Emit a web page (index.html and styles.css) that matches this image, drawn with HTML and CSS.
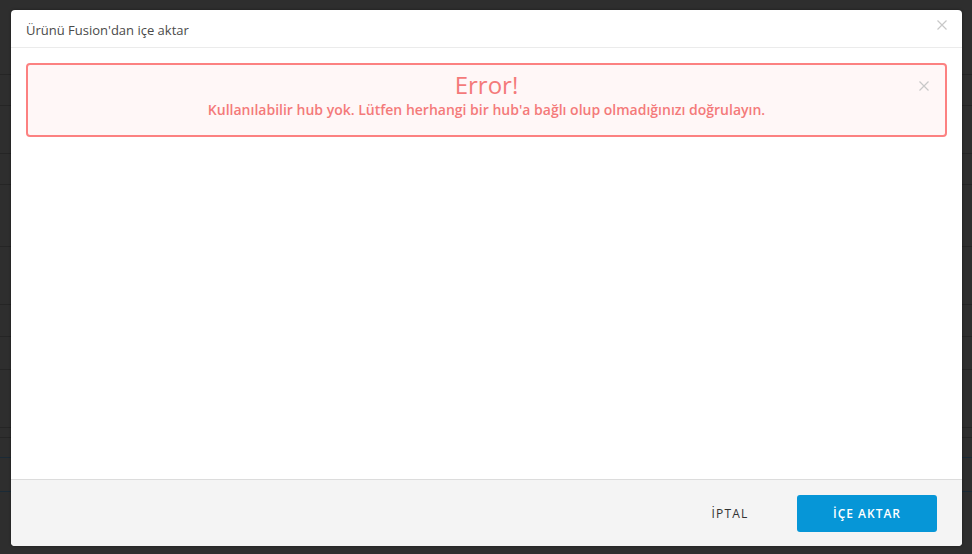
FILE: index.html
```html
<!DOCTYPE html>
<html lang="tr">
<head>
<meta charset="utf-8">
<title>Ürünü Fusion'dan içe aktar</title>
<link rel="stylesheet" href="styles.css">
</head>
<body>
<div class="backdrop">
  <div class="bg-lines">
    <div class="ln" style="top:74px"></div>
    <div class="ln" style="top:105px"></div>
    <div class="ln" style="top:153px"></div>
    <div class="ln" style="top:184px"></div>
    <div class="ln" style="top:246px"></div>
    <div class="ln" style="top:304px"></div>
    <div class="ln" style="top:336px"></div>
    <div class="ln" style="top:369px"></div>
    <div class="ln" style="top:427px"></div>
    <div class="ln" style="top:437px"></div>
    <div class="ln blue" style="top:457px"></div>
    <div class="ln blue" style="top:491px"></div>
  </div>
  <div class="dialog">
    <div class="header">
      <span class="title">Ürünü Fusion'dan içe aktar</span>
      <svg class="close" width="10" height="10" viewBox="0 0 10 10"><path d="M0.5 0.5L9.5 9.5M9.5 0.5L0.5 9.5" stroke="#c8c8c8" stroke-width="1.2"/></svg>
    </div>
    <div class="body">
      <div class="alert">
        <div class="alert-title">Error!</div>
        <div class="alert-msg">Kullanılabilir hub yok. Lütfen herhangi bir hub'a bağlı olup olmadığınızı doğrulayın.</div>
        <svg class="alert-close" width="10" height="10" viewBox="0 0 10 10"><path d="M0.5 0.5L9.5 9.5M9.5 0.5L0.5 9.5" stroke="#c8c8c8" stroke-width="1.2"/></svg>
      </div>
    </div>
    <div class="footer">
      <button class="btn btn-cancel">İPTAL</button>
      <button class="btn btn-primary">İÇE AKTAR</button>
    </div>
  </div>
</div>
</body>
</html>
```

FILE: styles.css
```css
html, body {
  margin: 0;
  padding: 0;
  width: 972px;
  height: 554px;
  overflow: hidden;
  background: #2e2e2e;
  font-family: "Open Sans", "Noto Sans", "Liberation Sans", sans-serif;
}
.backdrop {
  position: relative;
  width: 972px;
  height: 554px;
  padding: 10px 10px 8px 11px;
  box-sizing: border-box;
}
.bg-lines {
  position: absolute;
  inset: 0;
}
.ln {
  position: absolute;
  left: 0;
  right: 0;
  height: 1px;
  background: #252525;
}
.ln.blue {
  background: #1a2a36;
}
.dialog {
  position: relative;
  width: 951px;
  height: 536px;
  background: #fff;
  border-radius: 4px;
  display: flex;
  flex-direction: column;
  overflow: hidden;
  box-shadow: 0 0 3px rgba(0,0,0,0.4);
}
.header {
  height: 38px;
  border-bottom: 1px solid #ebebeb;
  display: flex;
  align-items: center;
  justify-content: space-between;
  padding: 0 15px 0 15px;
  box-sizing: border-box;
  flex: none;
}
.title {
  font-size: 13px;
  color: #4a4a4a;
  padding-top: 2px;
}
.close {
  margin-top: -8px;
}
.body {
  flex: 1;
  padding: 15px 15px 0 15px;
}
.alert {
  position: relative;
  height: 74px;
  box-sizing: border-box;
  border: 2px solid #fc8181;
  border-radius: 4px;
  background: #fff7f7;
  text-align: center;
  color: #f47a7a;
  padding-top: 5px;
}
.alert-title {
  font-size: 24px;
  line-height: 30px;
  color: #f47a7a;
}
.alert-msg {
  font-size: 14px;
  font-weight: 600;
  line-height: 18px;
  margin-top: 1px;
  color: #f47a7a;
}
.alert-close {
  position: absolute;
  right: 16px;
  top: 16px;
}
.footer {
  flex: none;
  height: 67px;
  border-top: 1px solid #dcdcdc;
  background: #f4f4f4;
  display: flex;
  align-items: center;
  justify-content: flex-end;
  gap: 13px;
  padding: 0 25px 0 0;
  box-sizing: border-box;
}
.btn {
  font-family: inherit;
  font-size: 12px;
  letter-spacing: 1px;
  border: none;
  border-radius: 3px;
  height: 37px;
  cursor: pointer;
}
.btn-cancel {
  background: transparent;
  color: #333;
  width: 126px;
  padding-left: 24px;
  letter-spacing: 1.2px;
}
.btn-primary {
  background: #0696d7;
  color: #fff;
  font-weight: 600;
  width: 140px;
}
```
